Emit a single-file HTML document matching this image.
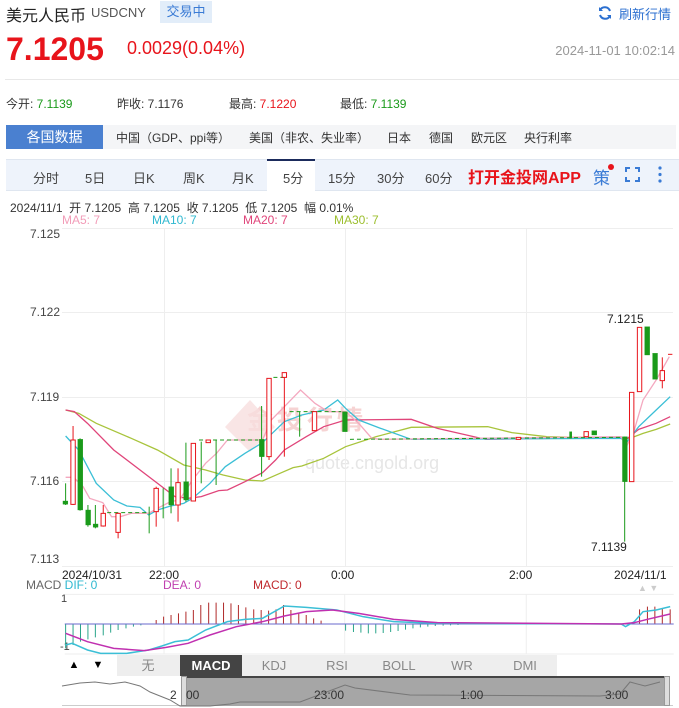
<!DOCTYPE html>
<html><head><meta charset="utf-8"><style>
*{margin:0;padding:0;box-sizing:border-box}
body{width:679px;height:708px;background:#fff;font-family:"Liberation Sans","Noto Sans CJK SC",sans-serif;color:#333;position:relative;overflow:hidden}
.a{position:absolute;white-space:nowrap}
</style></head><body>
<div class="a" style="left:6px;top:2px;font-size:16px;color:#222">美元人民币</div>
<div class="a" style="left:91px;top:5px;font-size:13px;color:#555">USDCNY</div>
<div class="a" style="left:160px;top:1px;width:52px;height:22px;background:#e2edf9;color:#3a7bd5;font-size:13px;line-height:22px;text-align:center">交易中</div>
<svg class="a" style="left:597px;top:5px" width="16" height="16" viewBox="0 0 16 16"><path d="M13 6A5.5 5.5 0 0 0 3 5M3 10a5.5 5.5 0 0 0 10 1" fill="none" stroke="#2b6fd0" stroke-width="2"/><path d="M2 2v4h4z M14 14v-4h-4z" fill="#2b6fd0"/></svg>
<div class="a" style="left:619px;top:4px;font-size:13px;color:#2b6fd0">刷新行情</div>
<div class="a" style="left:6px;top:31px;font-size:32px;font-weight:bold;color:#e8141b">7.1205</div>
<div class="a" style="left:127px;top:38px;font-size:18px;color:#e8141b">0.0029(0.04%)</div>
<div class="a" style="right:4px;top:43px;font-size:13px;color:#999">2024-11-01 10:02:14</div>
<div class="a" style="left:5px;top:79px;width:674px;height:1px;background:#e8e8e8"></div>
<div class="a" style="left:6px;top:95px;font-size:12px">今开: <span style="color:#1a9a1a">7.1139</span></div>
<div class="a" style="left:117px;top:95px;font-size:12px">昨收: 7.1176</div>
<div class="a" style="left:229px;top:95px;font-size:12px">最高: <span style="color:#e8141b">7.1220</span></div>
<div class="a" style="left:340px;top:95px;font-size:12px">最低: <span style="color:#1a9a1a">7.1139</span></div>
<div class="a" style="left:6px;top:125px;width:670px;height:24px;background:#f4f5f7"></div>
<div class="a" style="left:6px;top:125px;width:97px;height:24px;background:#4a80d0;color:#fff;font-size:14px;line-height:24px;text-align:center">各国数据</div>
<div class="a" style="left:116px;top:129px;font-size:12px">中国（GDP、ppi等）</div>
<div class="a" style="left:249px;top:129px;font-size:12px">美国（非农、失业率）</div>
<div class="a" style="left:387px;top:129px;font-size:12px">日本</div>
<div class="a" style="left:429px;top:129px;font-size:12px">德国</div>
<div class="a" style="left:471px;top:129px;font-size:12px">欧元区</div>
<div class="a" style="left:524px;top:129px;font-size:12px">央行利率</div>
<div class="a" style="left:6px;top:159px;width:673px;height:32px;background:#eef3fb;border-top:1px solid #dfe6f0;border-bottom:1px solid #dfe6f0"></div>
<div class="a" style="left:267px;top:159px;width:48px;height:33px;background:#fff;border-top:2px solid #1b2b5c"></div>
<div class="a" style="left:0;top:168px;font-size:13px;color:#444;width:679px">
<span class="a" style="left:33px">分时</span><span class="a" style="left:85px">5日</span><span class="a" style="left:133px">日K</span><span class="a" style="left:183px">周K</span><span class="a" style="left:232px">月K</span><span class="a" style="left:283px">5分</span><span class="a" style="left:328px">15分</span><span class="a" style="left:377px">30分</span><span class="a" style="left:425px">60分</span></div>
<div class="a" style="left:468px;top:164px;font-size:16px;font-weight:bold;color:#e8141b">打开金投网APP</div>
<div class="a" style="left:593px;top:164px;font-size:17px;color:#3a7bd5">策</div>
<div class="a" style="left:608px;top:164px;width:6px;height:6px;border-radius:3px;background:#e8141b"></div>
<svg class="a" style="left:625px;top:167px" width="15" height="15"><path d="M1 5V1h4M10 1h4v4M14 10v4h-4M5 14H1v-4" fill="none" stroke="#3a7bd5" stroke-width="2"/></svg>
<svg class="a" style="left:657px;top:166px" width="6" height="17"><circle cx="3" cy="2" r="1.6" fill="#3a7bd5"/><circle cx="3" cy="8.5" r="1.6" fill="#3a7bd5"/><circle cx="3" cy="15" r="1.6" fill="#3a7bd5"/></svg>
<div class="a" style="left:10px;top:199px;font-size:12px;color:#333">2024/11/1 &nbsp;开 7.1205 &nbsp;高 7.1205 &nbsp;收 7.1205 &nbsp;低 7.1205 &nbsp;幅 0.01%</div>
<div class="a" style="left:62px;top:213px;font-size:12px;color:#f29cb8">MA5: 7</div>
<div class="a" style="left:152px;top:213px;font-size:12px;color:#2fb8d0">MA10: 7</div>
<div class="a" style="left:243px;top:213px;font-size:12px;color:#e0457a">MA20: 7</div>
<div class="a" style="left:334px;top:213px;font-size:12px;color:#9cbf2e">MA30: 7</div>
<div class="a" style="left:30px;top:227px;font-size:12px;color:#444;line-height:14px">7.125</div>
<div class="a" style="left:30px;top:305px;font-size:12px;color:#444">7.122</div>
<div class="a" style="left:30px;top:390px;font-size:12px;color:#444">7.119</div>
<div class="a" style="left:30px;top:474px;font-size:12px;color:#444">7.116</div>
<div class="a" style="left:30px;top:552px;font-size:12px;color:#444">7.113</div>
<div class="a" style="left:62px;top:568px;font-size:12px;color:#222">2024/10/31</div>
<div class="a" style="left:149px;top:568px;font-size:12px;color:#222">22:00</div>
<div class="a" style="left:331px;top:568px;font-size:12px;color:#222">0:00</div>
<div class="a" style="left:509px;top:568px;font-size:12px;color:#222">2:00</div>
<div class="a" style="left:614px;top:568px;font-size:12px;color:#222">2024/11/1</div>
<div class="a" style="left:607px;top:312px;font-size:12px;color:#222">7.1215</div>
<div class="a" style="left:591px;top:540px;font-size:12px;color:#222">7.1139</div>
<div class="a" style="left:247px;top:400px;font-size:26px;color:#f6d3d3;font-weight:bold;letter-spacing:4px">金投行情</div>
<div class="a" style="left:305px;top:453px;font-size:18px;color:#e6e6e6">quote.cngold.org</div>
<svg class="a" style="left:0;top:220px" width="679" height="360">
<g stroke="#eee" stroke-width="1">
<line x1="62" y1="8.5" x2="673" y2="8.5"/><line x1="62" y1="92.5" x2="673" y2="92.5"/><line x1="62" y1="177.5" x2="673" y2="177.5"/><line x1="62" y1="261.5" x2="673" y2="261.5"/><line x1="62" y1="346.5" x2="673" y2="346.5"/>
<line x1="164.5" y1="8" x2="164.5" y2="346"/><line x1="345.5" y1="8" x2="345.5" y2="346"/><line x1="526.5" y1="8" x2="526.5" y2="346"/>
</g>
<polygon points="225,207 250,180 275,207 250,232" fill="#f8dede" opacity=".8"/>
<g transform="scale(0.43745,0.33333)">
<g fill="none" stroke-width="1.3">
<polyline vector-effect="non-scaling-stroke" stroke="#a8c43c" points="150,570 180,580 220,610 300,655 360,690 420,735 470,750 510,765 560,780 600,783 640,760 670,743 690,738 740,715 790,680 860,650 940,622 1115,620 1170,638 1250,650 1420,655 1440,655 1470,640 1500,628 1532,612"/>
<polyline vector-effect="non-scaling-stroke" stroke="#e0457a" points="150,570 170,575 200,610 260,690 340,770 370,800 400,830 430,835 460,830 500,812 520,810 560,785 600,758 630,720 650,690 700,650 740,620 790,600 940,598 1000,625 1110,658 1420,652 1430,660 1460,628 1500,610 1532,590"/>
<polyline vector-effect="non-scaling-stroke" stroke="#3bbfd6" points="150,648 180,690 220,790 260,840 290,858 320,862 340,885 360,870 390,858 420,850 440,835 480,790 515,740 560,700 600,668 650,605 690,585 740,570 772,540 790,565 820,600 870,625 940,658 1420,655 1432,668 1460,620 1500,570 1532,530"/>
<polyline vector-effect="non-scaling-stroke" stroke="#f4a8bf" points="150,772 168,772 190,800 205,835 235,848 255,890 275,890 300,880 340,880 360,865 390,845 410,840 440,780 470,730 495,700 520,660 600,660 620,600 650,560 687,510 720,550 750,575 790,575 820,610 850,655 870,658 1420,650 1432,680 1450,630 1470,540 1500,480 1530,410"/>
</g>
<g stroke-dasharray="4,3" stroke="#1a9a1a" stroke-width="1">
<line vector-effect="non-scaling-stroke" x1="245" y1="878" x2="340" y2="878"/>
<line vector-effect="non-scaling-stroke" x1="455" y1="660" x2="590" y2="660"/>
<line vector-effect="non-scaling-stroke" x1="625" y1="472" x2="650" y2="472"/>
<line vector-effect="non-scaling-stroke" x1="662" y1="575" x2="780" y2="575"/>
<line vector-effect="non-scaling-stroke" x1="800" y1="658" x2="1420" y2="652"/>
</g>
<g stroke="#1a9a1a" fill="#1a9a1a">
<line vector-effect="non-scaling-stroke" x1="150" y1="790" x2="150" y2="855"/><rect x="144" y="843" width="11" height="10"/>
<line vector-effect="non-scaling-stroke" x1="183" y1="655" x2="183" y2="872"/><rect x="178" y="658" width="11" height="212"/>
<line vector-effect="non-scaling-stroke" x1="201" y1="855" x2="201" y2="920"/><rect x="196" y="870" width="11" height="45"/>
<line vector-effect="non-scaling-stroke" x1="218" y1="855" x2="218" y2="925"/><rect x="213" y="912" width="11" height="10"/>
<line vector-effect="non-scaling-stroke" x1="341" y1="860" x2="341" y2="940"/>
<line vector-effect="non-scaling-stroke" x1="373" y1="805" x2="373" y2="895"/>
<line vector-effect="non-scaling-stroke" x1="391" y1="745" x2="391" y2="880"/><rect x="386" y="800" width="11" height="55"/>
<line vector-effect="non-scaling-stroke" x1="425" y1="668" x2="425" y2="845"/><rect x="420" y="785" width="11" height="55"/>
<line vector-effect="non-scaling-stroke" x1="460" y1="665" x2="460" y2="790"/>
<line vector-effect="non-scaling-stroke" x1="494" y1="660" x2="494" y2="795"/>
<line vector-effect="non-scaling-stroke" x1="598" y1="558" x2="598" y2="770"/><rect x="593" y="658" width="11" height="52"/>
<line vector-effect="non-scaling-stroke" x1="685" y1="575" x2="685" y2="650"/>
<rect x="783" y="575" width="11" height="60"/>
<rect x="1302" y="635" width="5" height="20"/>
<rect x="1353" y="632" width="11" height="13"/>
<line vector-effect="non-scaling-stroke" x1="1428" y1="650" x2="1428" y2="965"/><rect x="1423" y="650" width="11" height="135"/>
<rect x="1474" y="320" width="11" height="85"/>
<rect x="1492" y="400" width="11" height="78"/>
</g>
<g stroke="#e8141b" fill="#fff">
<line vector-effect="non-scaling-stroke" x1="167" y1="618" x2="167" y2="855"/><rect vector-effect="non-scaling-stroke" x="162" y="660" width="10" height="193"/>
<line vector-effect="non-scaling-stroke" x1="236" y1="855" x2="236" y2="920"/><rect vector-effect="non-scaling-stroke" x="231" y="880" width="10" height="38"/>
<line vector-effect="non-scaling-stroke" x1="270" y1="878" x2="270" y2="955"/><rect vector-effect="non-scaling-stroke" x="265" y="880" width="10" height="57"/>
<line vector-effect="non-scaling-stroke" x1="357" y1="800" x2="357" y2="920"/><rect vector-effect="non-scaling-stroke" x="352" y="805" width="10" height="70"/>
<line vector-effect="non-scaling-stroke" x1="407" y1="745" x2="407" y2="905"/><rect vector-effect="non-scaling-stroke" x="402" y="788" width="10" height="67"/>
<rect vector-effect="non-scaling-stroke" x="437" y="670" width="10" height="173"/>
<rect vector-effect="non-scaling-stroke" x="471" y="660" width="10" height="8"/>
<rect vector-effect="non-scaling-stroke" x="610" y="475" width="10" height="235"/><line vector-effect="non-scaling-stroke" x1="615" y1="710" x2="615" y2="720"/>
<line vector-effect="non-scaling-stroke" x1="650" y1="472" x2="650" y2="710"/><rect vector-effect="non-scaling-stroke" x="645" y="458" width="10" height="14"/>
<rect vector-effect="non-scaling-stroke" x="714" y="575" width="10" height="57"/>
<rect vector-effect="non-scaling-stroke" x="1180" y="652" width="10" height="6"/>
<rect vector-effect="non-scaling-stroke" x="1335" y="635" width="10" height="15"/>
<rect vector-effect="non-scaling-stroke" x="1439" y="517" width="10" height="268"/>
<rect vector-effect="non-scaling-stroke" x="1457" y="322" width="10" height="193"/>
<line vector-effect="non-scaling-stroke" x1="1514" y1="412" x2="1514" y2="505"/><rect vector-effect="non-scaling-stroke" x="1509" y="452" width="10" height="30"/>
<line vector-effect="non-scaling-stroke" x1="1527" y1="403" x2="1537" y2="403"/>
</g>
</g>
</svg>
<div class="a" style="left:26px;top:578px;font-size:12px;color:#666">MACD <span style="color:#2fb8d0">DIF: 0</span></div>
<div class="a" style="left:163px;top:578px;font-size:12px;color:#c040b0">DEA: 0</div>
<div class="a" style="left:253px;top:578px;font-size:12px;color:#c0282d">MACD: 0</div>
<div class="a" style="left:61px;top:593px;font-size:11px;color:#444">1</div>
<div class="a" style="left:60px;top:641px;font-size:11px;color:#444">-1</div>
<div class="a" style="left:638px;top:583px;font-size:9px;color:#ccc">▲ ▼</div>
<svg class="a" style="left:0;top:560px" width="679" height="148">
<g transform="scale(0.43745,0.33333)">
<line x1="148" y1="103" x2="1540" y2="103" stroke="#eee" vector-effect="non-scaling-stroke"/>
<line x1="148" y1="282" x2="1540" y2="282" stroke="#eee" vector-effect="non-scaling-stroke"/>
<line x1="788" y1="103" x2="788" y2="282" stroke="#eee" vector-effect="non-scaling-stroke"/>
<line x1="375" y1="103" x2="375" y2="282" stroke="#eee" vector-effect="non-scaling-stroke"/>
<line x1="1203" y1="103" x2="1203" y2="282" stroke="#eee" vector-effect="non-scaling-stroke"/>
<g stroke="#2aa58a">
<path vector-effect="non-scaling-stroke" d="M150 192V265M167 192V255M184 192V245M201 192V238M218 192V232M236 192V226M253 192V218M270 192V210M288 192V205M305 192V200M322 192V196M790 192V212M808 192V216M825 192V218M842 192V220M859 192V220M876 192V219M893 192V216M910 192V213M927 192V209M944 192V205M961 192V202M978 192V200M995 192V198M1013 192V197M1030 192V196M1047 192V195"/>
</g>
<g stroke="#b02a2a">
<path vector-effect="non-scaling-stroke" d="M357 192V180M374 192V170M391 192V165M408 192V160M425 192V155M442 192V150M459 192V135M477 192V128M494 192V128M511 192V128M528 192V130M545 192V135M562 192V142M580 192V148M597 192V150M614 192V152M631 192V148M648 192V135M665 192V150M683 192V160M700 192V165M717 192V175M734 192V182M1462 192V148M1480 192V140M1497 192V140M1514 192V145M1532 192V148"/>
</g>
<line x1="148" y1="192" x2="1540" y2="192" stroke="#6a6acc" vector-effect="non-scaling-stroke"/>
<polyline fill="none" stroke="#3bbfd6" stroke-width="1.5" vector-effect="non-scaling-stroke" points="150,255 165,250 200,270 230,280 290,280 340,270 370,258 400,245 430,240 470,210 520,185 560,178 600,175 650,138 700,142 770,150 830,170 900,185 1000,190 1420,192 1430,200 1450,185 1470,155 1500,150 1532,140"/>
<polyline fill="none" stroke="#c030b0" stroke-width="1.5" vector-effect="non-scaling-stroke" points="150,220 200,245 260,265 330,272 380,262 430,250 480,225 540,200 600,185 650,168 700,155 760,150 820,160 900,178 1000,188 1420,192 1450,188 1480,178 1532,162"/>
</g>
</svg>
<div class="a" style="left:62px;top:655px;width:611px;height:21px;background:#fff"></div>
<div class="a" style="left:62px;top:655px;width:24px;height:21px;font-size:11px;line-height:21px;text-align:center;color:#000">▲</div>
<div class="a" style="left:86px;top:655px;width:24px;height:21px;font-size:11px;line-height:21px;text-align:center;color:#000">▼</div>
<div class="a" style="left:117px;top:655px;width:440px;height:21px;background:#eee;font-size:13px;line-height:21px;color:#888">
<span class="a" style="left:0;width:62px;text-align:center">无</span>
<span class="a" style="left:63px;width:62px;text-align:center;background:#444;color:#fff;font-weight:bold;height:21px">MACD</span>
<span class="a" style="left:126px;width:62px;text-align:center">KDJ</span>
<span class="a" style="left:189px;width:62px;text-align:center">RSI</span>
<span class="a" style="left:251px;width:62px;text-align:center">BOLL</span>
<span class="a" style="left:314px;width:62px;text-align:center">WR</span>
<span class="a" style="left:377px;width:62px;text-align:center">DMI</span>
</div>
<div class="a" style="left:62px;top:676px;width:611px;height:30px;border-bottom:1px solid #ccc"></div>
<div class="a" style="left:181px;top:676px;width:488px;height:30px;background:#a6a6a6;border-top:2px solid #444"></div>
<div class="a" style="left:181px;top:676px;width:6px;height:30px;background:#ddd;border:1px solid #999"></div>
<div class="a" style="left:664px;top:676px;width:6px;height:30px;background:#ddd;border:1px solid #999"></div>
<svg class="a" style="left:0;top:676px" width="679" height="32"><polyline fill="none" stroke="#777" stroke-width="1" points="62,10 80,7 95,6 110,8 125,6 140,10 150,16 160,20 170,24 180,30 210,30 230,28 240,26 280,26 300,26 345,9 355,12 410,19 600,20 620,18 630,6 645,10 660,6"/></svg>
<div class="a" style="left:170px;top:688px;font-size:12px;color:#333">2</div>
<div class="a" style="left:186px;top:688px;font-size:12px;color:#333">00</div>
<div class="a" style="left:314px;top:688px;font-size:12px;color:#333">23:00</div>
<div class="a" style="left:460px;top:688px;font-size:12px;color:#333">1:00</div>
<div class="a" style="left:605px;top:688px;font-size:12px;color:#333">3:00</div>
</body></html>
